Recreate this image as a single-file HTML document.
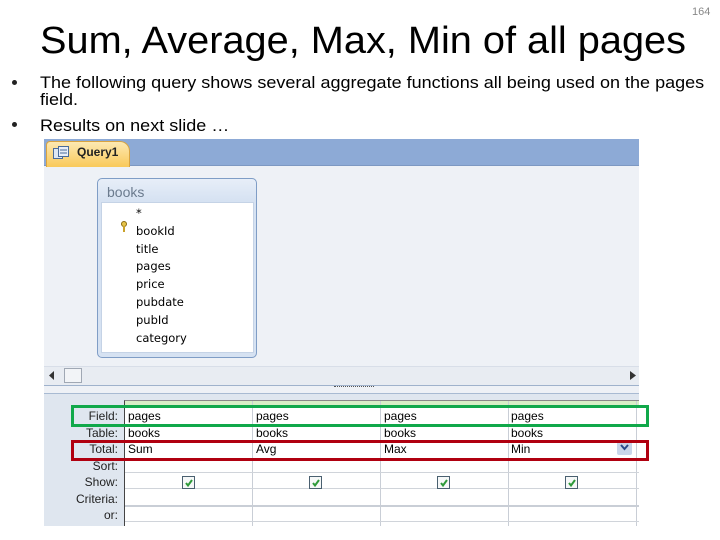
<!DOCTYPE html>
<html><head><meta charset="utf-8"><style>
*{margin:0;padding:0;box-sizing:border-box}
body{width:720px;height:540px;background:#fff;position:relative;overflow:hidden;font-family:"Liberation Sans",sans-serif;color:#000}
.a{position:absolute;white-space:nowrap}
.t{left:40px;top:20px;font-size:38px;transform-origin:0 0;transform:scaleX(1.045)}
.b{font-size:17px;transform-origin:0 0;transform:scaleX(1.06);line-height:17px}
.ms{font-size:11.5px;font-family:"DejaVu Sans",sans-serif}
.lab{right:0;width:78px;text-align:right;font-size:12px;color:#222}
.cell{font-size:12px}
.chk{position:absolute;width:13px;height:13px;border:1px solid #4a6070;background:#f6f8f8}
.dot{position:absolute;width:5px;height:5px;border-radius:50%;background:#222}
</style></head><body>
<div class="a" style="left:692px;top:6px;font-size:11px;color:#888">164</div>
<div class="a t">Sum, Average, Max, Min of all pages</div>
<div class="dot" style="left:12px;top:80px"></div>
<div class="a b" style="left:40px;top:74px">The following query shows several aggregate functions all being used on the pages</div>
<div class="a b" style="left:40px;top:91px">field.</div>
<div class="dot" style="left:12px;top:122px"></div>
<div class="a b" style="left:40px;top:117px">Results on next slide …</div>

<div class="a" style="left:44px;top:139px;width:595px;height:387px;background:#eef1f6;overflow:hidden">
  <div class="a" style="left:0;top:0;width:595px;height:27px;background:#8daad6;border-bottom:1px solid #7d98c2"></div>
  <div class="a" style="left:2px;top:2px;width:84px;height:26px;background:linear-gradient(#fde9b2,#f9c95a);border-radius:4px 10px 0 0;border:1px solid #d9a441;border-bottom:none"></div>
  <svg class="a" style="left:9px;top:7px" width="16" height="14"><rect x="0.5" y="2.5" width="9" height="10" fill="#dfe8f3" stroke="#4a6c9a"/><rect x="5.5" y="0.5" width="10" height="10" fill="#e8eef8" stroke="#4a6c9a"/><line x1="7" y1="4" x2="14" y2="4" stroke="#4a6c9a"/><line x1="7" y1="7" x2="14" y2="7" stroke="#4a6c9a"/></svg>
  <div class="a" style="left:33px;top:6px;font-size:12px;font-weight:bold;color:#222">Query1</div>
  <div class="a" style="left:53px;top:39px;width:160px;height:180px;border:1px solid #7f9dc6;border-radius:5px;background:linear-gradient(#e7eef8,#d6e2f2 22px,#d6e2f2)"></div>
  <div class="a" style="left:63px;top:45px;font-size:14px;color:#6b7b8e">books</div>
  <div class="a" style="left:57px;top:63px;width:153px;height:151px;background:#fff;border:1px solid #c5d3e6"></div>
  <div class="a ms" style="left:92px;top:66px;line-height:17.8px">*<br>bookId<br>title<br>pages<br>price<br>pubdate<br>pubId<br>category</div>
  <svg class="a" style="left:76px;top:82px" width="8" height="12"><circle cx="4" cy="3" r="2.5" fill="#e6c44a" stroke="#8a6a10"/><rect x="3" y="5" width="2" height="6" fill="#c9a22c"/></svg>
  <div class="a" style="left:0;top:227px;width:595px;height:20px;background:#e8ecf2;border-top:1px solid #d8dee8;border-bottom:1px solid #9fb2cc"></div>
  <svg class="a" style="left:5px;top:232px" width="6" height="9"><path d="M5 0L0 4.5L5 9Z" fill="#333"/></svg>
  <div class="a" style="left:20px;top:229px;width:18px;height:15px;background:#f2f4f7;border:1px solid #a0a8b4"></div>
  <svg class="a" style="left:586px;top:232px" width="6" height="9"><path d="M0 0L6 4.5L0 9Z" fill="#333"/></svg>
  <div class="a" style="left:290px;top:247px;width:40px;height:1px;border-top:1px dotted #555"></div>
  <div class="a" style="left:0;top:254px;width:595px;height:133px;background:#dfe6ef;border-top:1px solid #a8bad2"></div>
  <div class="a" style="left:80px;top:261px;width:515px;height:126px;background:#fff;border-left:1px solid #444;border-top:1px solid #888"></div>
  <div class="a" style="left:81px;top:262px;width:514px;height:7px;background:#d8eec6"></div>
  <div class="a" style="left:208px;top:262px;width:1px;height:125px;background:#c9ced6"></div>
  <div class="a" style="left:336px;top:262px;width:1px;height:125px;background:#c9ced6"></div>
  <div class="a" style="left:464px;top:262px;width:1px;height:125px;background:#c9ced6"></div>
  <div class="a" style="left:592px;top:262px;width:1px;height:125px;background:#c9ced6"></div>
  <div class="a" style="left:81px;top:333px;width:514px;height:1px;background:#d0d4da"></div>
  <div class="a" style="left:81px;top:349px;width:514px;height:1px;background:#d0d4da"></div>
  <div class="a" style="left:81px;top:366px;width:514px;height:2px;background:#c9ced6"></div>
  <div class="a" style="left:81px;top:382px;width:514px;height:1px;background:#d0d4da"></div>
  <div class="a lab" style="left:0;top:269px;line-height:16.5px;width:74px">Field:<br>Table:<br>Total:<br>Sort:<br>Show:<br>Criteria:<br>or:</div>
  <div class="a cell" style="left:84px;top:269px;line-height:16.5px">pages<br>books<br>Sum</div>
  <div class="a cell" style="left:212px;top:269px;line-height:16.5px">pages<br>books<br>Avg</div>
  <div class="a cell" style="left:340px;top:269px;line-height:16.5px">pages<br>books<br>Max</div>
  <div class="a cell" style="left:467px;top:269px;line-height:16.5px">pages<br>books<br>Min</div>
  <div class="a" style="left:573px;top:302px;width:15px;height:14px;background:#c9d6ea;border-radius:2px"></div>
  <svg class="a" style="left:576px;top:305px" width="9" height="7"><path d="M1 1L4.5 5L8 1" fill="none" stroke="#2a4a8a" stroke-width="2"/></svg>
</div>
<div class="chk" style="left:182px;top:476px"></div>
<div class="chk" style="left:309px;top:476px"></div>
<div class="chk" style="left:437px;top:476px"></div>
<div class="chk" style="left:565px;top:476px"></div>
<svg class="a" style="left:184px;top:478px" width="10" height="10"><path d="M2 5L4 7.5L8 2" fill="none" stroke="#2e9a3a" stroke-width="2"/></svg>
<svg class="a" style="left:311px;top:478px" width="10" height="10"><path d="M2 5L4 7.5L8 2" fill="none" stroke="#2e9a3a" stroke-width="2"/></svg>
<svg class="a" style="left:439px;top:478px" width="10" height="10"><path d="M2 5L4 7.5L8 2" fill="none" stroke="#2e9a3a" stroke-width="2"/></svg>
<svg class="a" style="left:567px;top:478px" width="10" height="10"><path d="M2 5L4 7.5L8 2" fill="none" stroke="#2e9a3a" stroke-width="2"/></svg>
<div class="a" style="left:71px;top:405px;width:578px;height:22px;border:3px solid #10a84a"></div>
<div class="a" style="left:71px;top:440px;width:578px;height:21px;border:3px solid #b00010"></div>
</body></html>
